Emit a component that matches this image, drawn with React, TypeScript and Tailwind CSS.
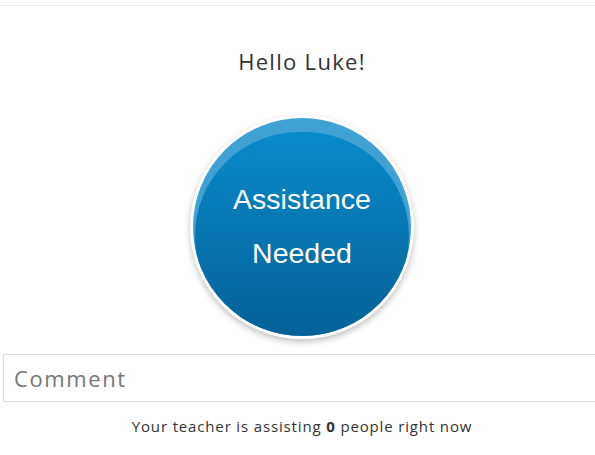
export default function App() {
  return (
    <div className="min-h-screen w-[595px] overflow-hidden bg-white font-['Open_Sans','Lato',sans-serif] text-[#333]">
      <div className="h-[5px]" />
      <div className="border-t border-[#e8e8e8]" />

      <div className="ml-[3px] w-[598px]">
        {/* Greeting */}
        <h1 className="mt-[40px] text-center text-[22px] leading-[30px] font-normal tracking-[1.3px]">Hello Luke!</h1>

        {/* Big button */}
        <div className="mt-[39px] flex justify-center">
          <button className="relative flex h-[224px] w-[224px] flex-col items-center justify-center overflow-hidden rounded-full border-[3px] border-white bg-[#3fa2d3] shadow-[0_3px_6px_rgba(0,0,0,0.25)] font-['Liberation_Sans',Arial,sans-serif] text-[28.5px] leading-[54px] text-white">
            <span className="absolute left-[2px] right-[2px] top-[14px] bottom-[-4px] rounded-full bg-gradient-to-b from-[#078bc9] to-[#066097]" />
            <span className="relative -mt-[2px]">Assistance</span>
            <span className="relative">Needed</span>
          </button>
        </div>

        {/* Comment */}
        <input
          placeholder="Comment"
          className="mt-[15px] block h-[48px] w-full border border-[#ddd] px-[10px] text-[22px] tracking-[1.6px] text-[#555] placeholder:text-[#777] outline-none"
        />

        <p className="mt-[14px] text-center text-[15px] leading-[20px] tracking-[0.85px]">
          Your teacher is assisting <b>0</b> people right now
        </p>
      </div>
    </div>
  );
}
